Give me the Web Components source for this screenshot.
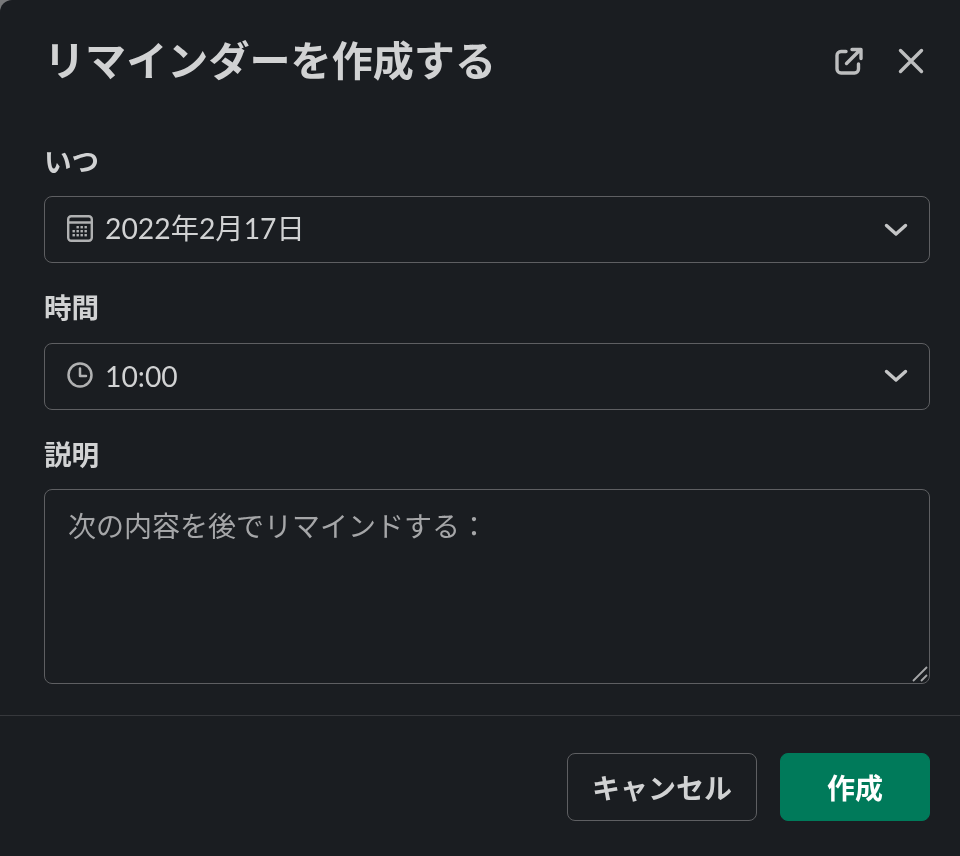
<!doctype html>
<html lang="ja">
<head>
<meta charset="utf-8">
<title>リマインダー</title>
<style>
  html, body { margin: 0; height: 100%; background: #77787a; }
  body {
    color: #d1d2d3;
    font-family: "Lato", "Noto Sans CJK JP", sans-serif;
  }
</style>
</head>
<body>
<reminder-dialog>
  <dialog-header slot="header" title-text="リマインダーを作成する"></dialog-header>
  <form-field label="いつ">
    <select-box style="--text-lift: 4px">
      <svg slot="icon" viewBox="0 0 26 27" width="26" height="27" fill="none" stroke="currentColor" stroke-width="2.4">
        <rect x="1.2" y="1.2" width="23.6" height="24.6" rx="3"/>
        <path d="M1.5 7.5h23"/>
        <g fill="currentColor" stroke="none">
          <rect x="9.5" y="11" width="2.4" height="2.4"/><rect x="13.5" y="11" width="2.4" height="2.4"/><rect x="17.5" y="11" width="2.4" height="2.4"/>
          <rect x="5.5" y="15" width="2.4" height="2.4"/><rect x="9.5" y="15" width="2.4" height="2.4"/><rect x="13.5" y="15" width="2.4" height="2.4"/><rect x="17.5" y="15" width="2.4" height="2.4"/>
          <rect x="5.5" y="19" width="2.4" height="2.4"/><rect x="9.5" y="19" width="2.4" height="2.4"/><rect x="13.5" y="19" width="2.4" height="2.4"/><rect x="17.5" y="19" width="2.4" height="2.4"/>
        </g>
      </svg>
      2022年2月17日
    </select-box>
  </form-field>
  <form-field label="時間">
    <select-box>
      <svg slot="icon" viewBox="0 0 26 26" width="26" height="26" fill="none" stroke="currentColor" stroke-width="2.5">
        <circle cx="13" cy="13" r="11.5"/>
        <path d="M13 6.5V14h6" stroke-linecap="round" stroke-linejoin="round"/>
      </svg>
      10:00
    </select-box>
  </form-field>
  <form-field label="説明">
    <note-box>次の内容を後でリマインドする：</note-box>
  </form-field>
  <dialog-button slot="footer">キャンセル</dialog-button>
  <dialog-button slot="footer" primary>作成</dialog-button>
</reminder-dialog>

<script>
class ReminderDialog extends HTMLElement {
  constructor() {
    super();
    this.attachShadow({ mode: "open" }).innerHTML = `
      <style>
        :host {
          display: block; width: 960px; height: 856px; overflow: hidden;
          background: #1a1d21; border-top-left-radius: 12px;
          filter: blur(0.45px);
        }
        #form { padding: 0 30px 0 44px; height: 544px; }
        #footer {
          display: flex; justify-content: flex-end; gap: 23px;
          border-top: 1px solid #36383c;
          padding: 37px 30px 0 0;
          margin-top: 29.5px;
        }
      </style>
      <slot name="header"></slot>
      <div id="form"><slot></slot></div>
      <div id="footer"><slot name="footer"></slot></div>
    `;
  }
}

class DialogHeader extends HTMLElement {
  constructor() {
    super();
    this.attachShadow({ mode: "open" }).innerHTML = `
      <style>
        :host {
          display: flex; align-items: center; justify-content: space-between;
          height: 60px; padding: 30px 36px 51.5px 44px;
        }
        h1 { margin: 0; font-size: 41.1px; line-height: 60px; font-weight: 700; }
        #actions { display: flex; align-items: center; gap: 34px; margin-top: 2px; color: #bdbebf; }
        svg { display: block; }
      </style>
      <h1></h1>
      <div id="actions">
        <svg viewBox="0 0 30 30" width="30" height="30" fill="none" stroke="currentColor" stroke-width="3.4" stroke-linecap="round" stroke-linejoin="round">
          <path d="M12 5.5H7a4 4 0 0 0-4 4V23a4 4 0 0 0 4 4h13.5a4 4 0 0 0 4-4v-5"/>
          <path d="M12.5 17.5 26 4M18 3.5h9v9"/>
        </svg>
        <svg viewBox="0 0 26 26" width="26" height="26" fill="none" stroke="currentColor" stroke-width="3.4" stroke-linecap="round">
          <path d="M2.5 2.5l21 21M23.5 2.5l-21 21"/>
        </svg>
      </div>
    `;
    this.shadowRoot.querySelector("h1").textContent = this.getAttribute("title-text");
  }
}

class FormField extends HTMLElement {
  constructor() {
    super();
    this.attachShadow({ mode: "open" }).innerHTML = `
      <style>
        :host { display: block; margin-bottom: 25px; }
        label { display: block; font-size: 27.6px; line-height: 40px; font-weight: 700; margin-bottom: 14.5px; }
      </style>
      <label></label>
      <slot></slot>
    `;
    this.shadowRoot.querySelector("label").textContent = this.getAttribute("label");
  }
}

class SelectBox extends HTMLElement {
  constructor() {
    super();
    this.attachShadow({ mode: "open" }).innerHTML = `
      <style>
        :host {
          display: flex; align-items: center; box-sizing: border-box;
          height: 67px; padding: 0 21px 0 22px;
          border: 1.5px solid #5e5f62; border-radius: 8px;
          font-size: 28.3px; line-height: 40px; color: #d1d2d3;
        }
        #icon { display: flex; margin: -3px 12px 0 0; color: #b0b1b2; }
        #text { flex: 1; padding-bottom: var(--text-lift, 0); }
        svg { display: block; color: #c4c5c6; }
      </style>
      <div id="icon"><slot name="icon"></slot></div>
      <div id="text"><slot></slot></div>
      <svg viewBox="0 0 24 14" width="24" height="14" fill="none" stroke="currentColor" stroke-width="3.4" stroke-linecap="round" stroke-linejoin="round">
        <path d="M2.5 2.5 12 11l9.5-8.5"/>
      </svg>
    `;
  }
}

class NoteBox extends HTMLElement {
  constructor() {
    super();
    this.attachShadow({ mode: "open" }).innerHTML = `
      <style>
        :host {
          display: block; position: relative; box-sizing: border-box;
          height: 195px; padding: 15px 23px;
          border: 1.5px solid #5e5f62; border-radius: 8px;
          font-size: 28px; line-height: 42px; color: #a5a6a8;
        }
        svg { position: absolute; right: 1px; bottom: 1px; }
      </style>
      <slot></slot>
      <svg viewBox="0 0 16 16" width="16" height="16" stroke="#a5a6a8" stroke-width="1.8" fill="none">
        <path d="M1 15 15 1M9 15l6-6"/>
      </svg>
    `;
  }
}

class DialogButton extends HTMLElement {
  constructor() {
    super();
    this.attachShadow({ mode: "open" }).innerHTML = `
      <style>
        :host {
          display: flex; align-items: center; justify-content: center; box-sizing: border-box;
          width: 190px; height: 68px;
          border: 1.5px solid #5e5f62; border-radius: 8px;
          font-size: 28px; font-weight: 700; color: #d1d2d3;
        }
        :host([primary]) { width: 150px; background: #007a5a; border-color: #007a5a; color: #fff; }
      </style>
      <slot></slot>
    `;
  }
}

customElements.define("reminder-dialog", ReminderDialog);
customElements.define("dialog-header", DialogHeader);
customElements.define("form-field", FormField);
customElements.define("select-box", SelectBox);
customElements.define("note-box", NoteBox);
customElements.define("dialog-button", DialogButton);
</script>
</body>
</html>
